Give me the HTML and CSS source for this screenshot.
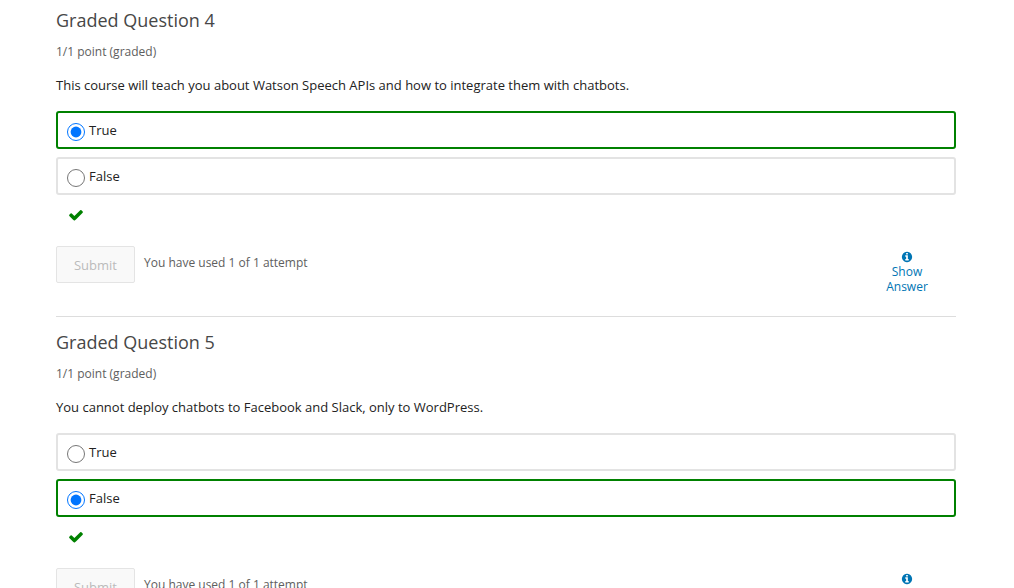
FILE: index.html
```html
<!DOCTYPE html>
<html lang="en">
<head>
<meta charset="utf-8">
<title>Graded Questions</title>
<link rel="stylesheet" href="styles.css">
</head>
<body>
<main class="page">
  <form class="problem">
    <h3 class="title">Graded Question 4</h3>
    <p class="progress">1/1 point (graded)</p>
    <fieldset class="choices">
      <legend class="prompt">This course will teach you about Watson Speech APIs and how to integrate them with chatbots.</legend>
      <label class="choice correct"><input class="radio" type="radio" name="q4" checked>True</label>
      <label class="choice"><input class="radio" type="radio" name="q4">False</label>
    </fieldset>
    <svg class="check" viewBox="0 0 1792 1792" role="img" aria-label="correct"><path d="M1671 566q0 40-28 68l-724 724-136 136q-28 28-68 28t-68-28l-136-136-362-362q-28-28-28-68t28-68l136-136q28-28 68-28t68 28l294 295 656-657q28-28 68-28t68 28l136 136q28 28 28 68z"/></svg>
    <div class="action">
      <button class="submit" type="button" disabled>Submit</button>
      <span class="feedback">You have used 1 of 1 attempt</span>
      <button class="show" type="button"><svg class="info" viewBox="0 0 1792 1792" aria-hidden="true"><path d="M1152 1376v-160q0-14-9-23t-23-9h-96v-512q0-14-9-23t-23-9h-320q-14 0-23 9t-9 23v160q0 14 9 23t23 9h96v320h-96q-14 0-23 9t-9 23v160q0 14 9 23t23 9h448q14 0 23-9t9-23zm-128-896v-160q0-14-9-23t-23-9h-192q-14 0-23 9t-9 23v160q0 14 9 23t23 9h192q14 0 23-9t9-23zm640 416q0 209-103 385.500t-279.500 279.500-385.500 103-385.500-103-279.500-279.500-103-385.500 103-385.500 279.500-279.500 385.500-103 385.500 103 279.500 279.500 103 385.500z"/></svg>Show Answer</button>
    </div>
  </form>
  <form class="problem">
    <h3 class="title">Graded Question 5</h3>
    <p class="progress">1/1 point (graded)</p>
    <fieldset class="choices">
      <legend class="prompt">You cannot deploy chatbots to Facebook and Slack, only to WordPress.</legend>
      <label class="choice"><input class="radio" type="radio" name="q5">True</label>
      <label class="choice correct"><input class="radio" type="radio" name="q5" checked>False</label>
    </fieldset>
    <svg class="check" viewBox="0 0 1792 1792" role="img" aria-label="correct"><path d="M1671 566q0 40-28 68l-724 724-136 136q-28 28-68 28t-68-28l-136-136-362-362q-28-28-28-68t28-68l136-136q28-28 68-28t68 28l294 295 656-657q28-28 68-28t68 28l136 136q28 28 28 68z"/></svg>
    <div class="action">
      <button class="submit" type="button" disabled>Submit</button>
      <span class="feedback">You have used 1 of 1 attempt</span>
      <button class="show" type="button"><svg class="info" viewBox="0 0 1792 1792" aria-hidden="true"><path d="M1152 1376v-160q0-14-9-23t-23-9h-96v-512q0-14-9-23t-23-9h-320q-14 0-23 9t-9 23v160q0 14 9 23t23 9h96v320h-96q-14 0-23 9t-9 23v160q0 14 9 23t23 9h448q14 0 23-9t9-23zm-128-896v-160q0-14-9-23t-23-9h-192q-14 0-23 9t-9 23v160q0 14 9 23t23 9h192q14 0 23-9t9-23zm640 416q0 209-103 385.500t-279.500 279.500-385.500 103-385.500-103-279.500-279.500-103-385.500 103-385.500 279.500-279.500 385.500-103 385.500 103 279.500 279.500 103 385.500z"/></svg>Show Answer</button>
    </div>
  </form>
</main>
</body>
</html>
```
FILE: styles.css
```css
* { box-sizing: border-box; }
body {
  margin: 0;
  background: #fff;
  color: #222;
  font-family: "Open Sans", "Liberation Sans", sans-serif;
  font-size: 13px;
}
/* scrolls without a visible bar */
html { scrollbar-width: none; }
.page { padding: 0 58px 0 56px; }
.problem { padding: 8px 0 22px; }
.problem + .problem { border-top: 1px solid #ddd; padding-top: 13px; }
.title {
  margin: 0;
  color: #474747;
  font-size: 18px;
  font-weight: 400;
  line-height: 24px;
}
.progress {
  margin: 11px 0 0;
  color: #5e5e5e;
  font-size: 12px;
  line-height: 18px;
}
.choices { margin: 0; padding: 0; border: 0; min-width: 0; }
.prompt { padding: 14px 0 16px; line-height: 20px; }
.choice {
  display: flex;
  align-items: center;
  height: 38px;
  margin-bottom: 8px;
  padding: 0 9px;
  border: 2px solid #e3e3e3;
  border-radius: 3px;
}
.choice.correct { border-color: #008100; }
.radio { width: 18px; height: 18px; margin: 3px 4px 0 0; }
.check { display: block; width: 16px; height: 16px; margin: 4px 0 0 12px; fill: #008100; }
.action { display: flex; align-items: flex-start; margin-top: 23px; }
.submit {
  width: 79px;
  height: 37px;
  border: 1px solid #e4e4e4;
  border-radius: 2px;
  background: #f9f9f9;
  color: #bbb;
  font: inherit;
}
.feedback { margin: 8px auto 0 9px; color: #5e5e5e; font-size: 12px; line-height: 18px; }
.show {
  width: 60px;
  margin: 5px 19px 0 0;
  padding: 0;
  border: 0;
  background: none;
  color: #0075b4;
  font: 12px/15px "Open Sans", "Liberation Sans", sans-serif;
}
.info { display: block; width: 12px; height: 12px; margin: 0 auto 1px; fill: currentColor; }
```
